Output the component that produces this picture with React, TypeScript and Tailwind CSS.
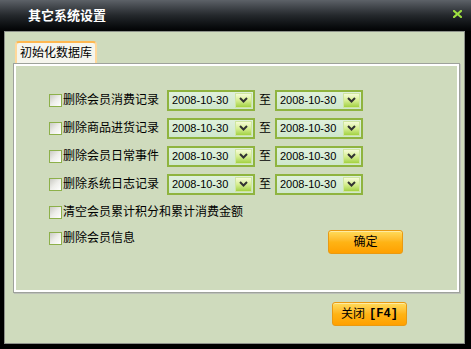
const rows = ["删除会员消费记录", "删除商品进货记录", "删除会员日常事件", "删除系统日志记录"];

const cjk = { fontFamily: '"Liberation Sans", "Noto Sans CJK SC", sans-serif' };

function CheckBox() {
  return (
    <div className="h-[13px] w-[13px] shrink-0 border border-[#8db04a] bg-gradient-to-br from-[#cacac4] via-[#eeeeea] to-white" />
  );
}

function DateSelect({ value }: { value: string }) {
  return (
    <div className="flex h-[21px] w-[88px] items-center border-2 border-[#8fb43f] bg-gradient-to-b from-[#dff0dc] to-[#cfe7cc] pl-[3px] pr-[1px]">
      <span className="flex-1 text-[11px] leading-none text-black">{value}</span>
      <div className="flex h-[15px] w-[17px] items-center justify-center border border-[#cfe6a0] bg-gradient-to-b from-[#f6fbd8] via-[#d6ee90] to-[#a3d240]">
        <svg width="9" height="6" viewBox="0 0 9 6">
          <polyline points="1,1 4.5,4.5 8,1" fill="none" stroke="#333" strokeWidth="2" />
        </svg>
      </div>
    </div>
  );
}

function OrangeButton({ children, className = "" }: { children: React.ReactNode; className?: string }) {
  return (
    <div
      className={`flex h-[24px] w-[75px] items-center justify-center rounded-[3px] border border-[#e99a12] bg-gradient-to-b from-[#ffdc5a] via-[#ffb414] to-[#ffa000] text-[12px] text-black shadow-[inset_0_1px_0_#ffeaa0] ${className}`}
    >
      {children}
    </div>
  );
}

export default function App() {
  return (
    <div className="flex h-[349px] w-[471px] flex-col bg-black" style={cjk}>
      {/* title bar */}
      <div className="relative flex h-[31px] shrink-0 items-center bg-gradient-to-b from-[#5d6268] via-[#24282c] to-[#030405] pl-[28px]">
        <span className="text-[13px] font-bold text-white">其它系统设置</span>
        <svg className="absolute left-[453px] top-[10px]" width="9" height="8" viewBox="0 0 9 8">
          <path d="M1 1 L8 7 M8 1 L1 7" stroke="#9fe040" strokeWidth="2.2" strokeLinecap="square" />
        </svg>
      </div>

      {/* body */}
      <div className="mb-[5px] ml-[4px] mr-[6px] flex flex-1 flex-col border border-[#8d918a] bg-[#cfdbbd] pt-[9px]">
        {/* tab */}
        <div className="ml-[10px] flex h-[22px] w-[82px] items-center justify-center rounded-t-[4px] border-x-2 border-t-2 border-x-[#ffd89a] border-t-[#ffb850] bg-[#f5f5ed] text-[12px] text-black">
          初始化数据库
        </div>

        {/* panel */}
        <div className="ml-[8px] mr-[4px] h-[230px] border border-[#9ea29b] shadow-[1px_1px_0_#bcc0b8]">
          <div className="h-full border-2 border-white pl-[33px] pt-[20px]">
            {rows.map((r) => (
              <div key={r} className="flex h-[28px] items-center">
                <CheckBox />
                <span className="w-[105px] pl-[1px] text-[12px] text-black">{r}</span>
                <DateSelect value="2008-10-30" />
                <span className="w-[20px] text-center text-[12px] text-black">至</span>
                <DateSelect value="2008-10-30" />
              </div>
            ))}
            <div className="flex h-[28px] items-center">
              <CheckBox />
              <span className="pl-[1px] text-[12px] text-black">清空会员累计积分和累计消费金额</span>
            </div>
            <div className="flex h-[24px] items-center">
              <CheckBox />
              <span className="w-[266px] pl-[1px] text-[12px] text-black">删除会员信息</span>
              <OrangeButton className="mt-[8px]">确定</OrangeButton>
            </div>
          </div>
        </div>

        <div className="mt-[9px] flex justify-end pr-[57px]">
          <OrangeButton>
            关闭<span className="ml-[4px] font-bold" style={{ fontFamily: '"Liberation Mono", monospace' }}>[F4]</span>
          </OrangeButton>
        </div>
      </div>
    </div>
  );
}
